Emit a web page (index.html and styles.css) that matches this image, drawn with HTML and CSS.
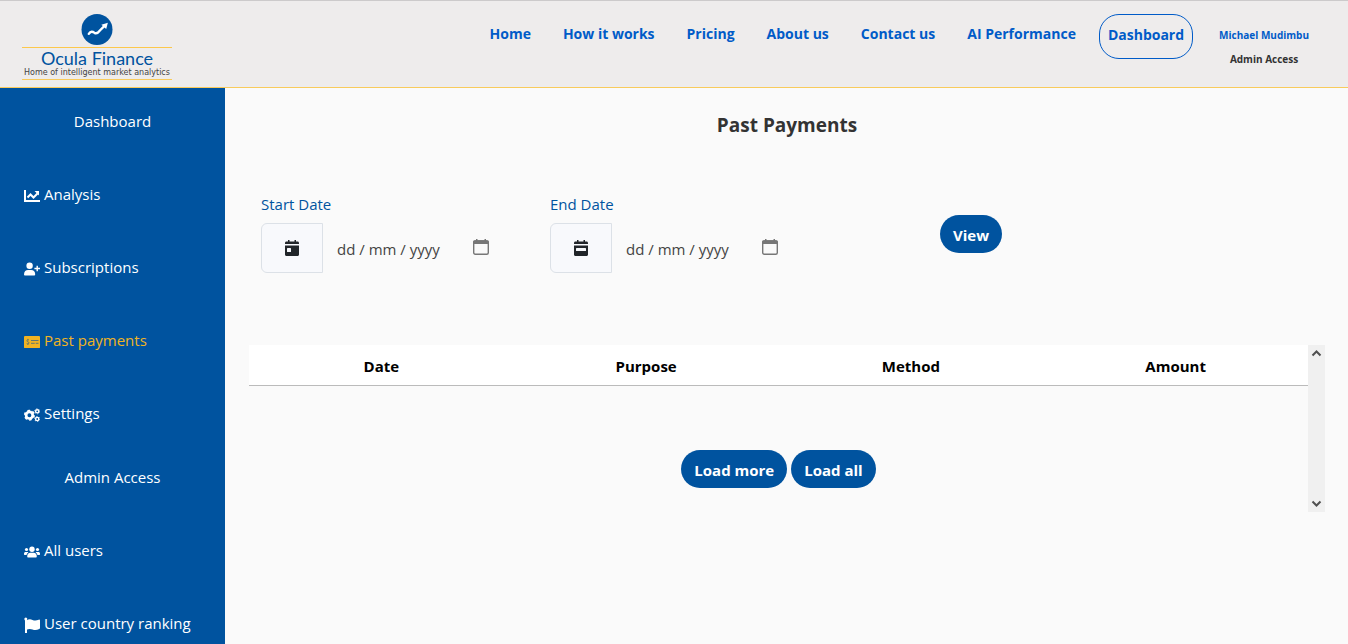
FILE: index.html
```html
<!DOCTYPE html>
<html lang="en">
<head>
<meta charset="utf-8">
<title>Ocula Finance - Past Payments</title>
<link rel="stylesheet" href="styles.css">
</head>
<body>
<header class="topbar">
  <a class="brand" href="#">
    <svg class="brand-mark" viewBox="0 0 32 32" aria-hidden="true">
      <circle cx="16" cy="16" r="16" fill="#00539f"/>
      <path d="M7.500 20.500c2-3 4-2.500 6-1 2.500 1.500 4-.5 5.500-2.500l5-5" fill="none" stroke="#fff" stroke-width="2.400" stroke-linecap="round"/>
      <path d="M20.500 11l6.700-2-1.700 6.500z" fill="#fff"/>
    </svg>
    <span class="brand-name">Ocula Finance</span>
    <span class="brand-tag">Home of intelligent market analytics</span>
  </a>
  <nav class="nav" aria-label="Main">
    <a href="#">Home</a>
    <a href="#">How it works</a>
    <a href="#">Pricing</a>
    <a href="#">About us</a>
    <a href="#">Contact us</a>
    <a href="#">AI Performance</a>
  </nav>
  <a class="nav-button" href="#">Dashboard</a>
  <div class="account">
    <a href="#">Michael Mudimbu</a>
    <span>Admin Access</span>
  </div>
</header>
<div class="layout">
  <nav class="sidebar" aria-label="Dashboard">
    <a class="side-title" href="#">Dashboard</a>
    <a class="side-link" href="#">
      <svg class="icon" viewBox="0 0 16 16" fill="none" stroke="currentColor" aria-hidden="true"><path d="M1 2v11h15" stroke-width="2"/><path d="M3.500 9.500l3-3 3 3 4-4" stroke-width="2"/><path d="M10.500 3H15v4.500z" fill="currentColor" stroke="none"/></svg>
      Analysis</a>
    <a class="side-link" href="#">
      <svg class="icon" viewBox="0 0 16 16" fill="currentColor" aria-hidden="true"><circle cx="5.600" cy="4.800" r="3.200"/><path d="M0 13.200C0 10.500 1.800 9 4 9h3.200c2.200 0 4 1.500 4 4.200 0 .8-.4 1.300-1.200 1.300H1.200C.4 14.500 0 14 0 13.200z"/><path d="M12.500 4.800h1.400v2H16v1.400h-2.100v2.100h-1.400V8.200h-2.100V6.800h2.100z"/></svg>
      Subscriptions</a>
    <a class="side-link active" href="#">
      <svg class="icon" viewBox="0 0 16 16" aria-hidden="true"><path fill="currentColor" d="M.5 2h15l.5.700v11l-.5.300H.5l-.5-.3v-11z"/><path d="M4.900 6.200c-.5-.5-2-.5-2 .6S5 7.700 5 8.900s-1.700 1.200-2.300.6M3.900 4.900v1M3.900 9.700v1.200M7 6.500h7.500M7 9.300h3.700M11.700 9.300h2.800" fill="none" stroke="#4f6e78" stroke-width=".9"/></svg>
      Past payments</a>
    <a class="side-link" href="#">
      <svg class="icon" viewBox="0 0 16 16" fill="none" stroke="currentColor" aria-hidden="true"><circle cx="5.400" cy="8.200" r="3.300" stroke-width="2.700"/><circle cx="5.400" cy="8.200" r="4.700" stroke-width="1.700" stroke-dasharray="2.500 2.422"/><circle cx="13.200" cy="4.300" r="1.600" stroke-width="1.400"/><circle cx="13.200" cy="4.300" r="2.500" stroke-width=".8" stroke-dasharray="1.300 1.318"/><circle cx="13.200" cy="12" r="1.600" stroke-width="1.400"/><circle cx="13.200" cy="12" r="2.500" stroke-width=".8" stroke-dasharray="1.300 1.318"/></svg>
      Settings</a>
    <a class="side-sub" href="#">Admin Access</a>
    <a class="side-link" href="#">
      <svg class="icon" viewBox="0 0 16 16" fill="currentColor" aria-hidden="true"><circle cx="8" cy="5.300" r="2.700"/><circle cx="2.500" cy="5.500" r="1.600"/><circle cx="13.500" cy="5.500" r="1.600"/><path d="M3.200 12.300C3.200 10 4.600 8.800 6.200 8.800h3.600c1.600 0 3 1.200 3 3.500 0 .8-.4 1.200-1.100 1.200H4.300c-.7 0-1.100-.4-1.100-1.200z"/><path d="M0 10.600V9.500C0 8.600.7 8 1.600 8h1.800c.4 0 .8.200 1 .4-1 .6-1.600 1.300-1.800 2.600H.5zM16 10.600V9.500c0-.9-.7-1.500-1.600-1.500h-1.800c-.4 0-.8.200-1 .4 1 .6 1.600 1.300 1.800 2.600h2.100z"/></svg>
      All users</a>
    <a class="side-link" href="#">
      <svg class="icon" viewBox="0 0 16 16" fill="currentColor" aria-hidden="true"><circle cx="1.800" cy="1.900" r="1.500"/><path d="M1 2h2v14H1z"/><path d="M2.500 3.500C4.500 2 6.500 2 8.500 2.900s4 .8 6.200-.2c.8-.3 1.300 0 1.300.7v7.700c0 .5-.2.800-.7 1-2.500 1.200-4.800 1.200-6.800.4s-4-.8-6 .2z"/></svg>
      User country ranking</a>
  </nav>
  <main class="main">
    <h1>Past Payments</h1>
    <form class="filters">
      <div class="field">
        <label for="start">Start Date</label>
        <div class="group">
          <span class="addon"><svg class="icon" viewBox="0 0 16 16" aria-hidden="true"><path fill="currentColor" d="M4 0h1.500v1.500h5V0H12v1.500h1.500c.9 0 1.500.6 1.500 1.500v1H1V3c0-.9.600-1.500 1.500-1.500H4zM1 5.500h14v9c0 .9-.6 1.500-1.500 1.500h-11C1.600 16 1 15.400 1 14.500z"/><rect x="3" y="8" width="4" height="4" rx=".5" fill="#f8f9fc"/></svg></span>
          <input id="start" type="text" placeholder="dd / mm / yyyy">
          <button class="picker" type="button" aria-label="Pick start date"><svg class="icon" viewBox="0 0 16 16" aria-hidden="true"><path fill="currentColor" d="M3 0h1.500v1.300h7V0H13v1.300h1c1.200 0 2 .8 2 2V5H0V3.300c0-1.200.8-2 2-2h1z"/><rect x=".7" y="2" width="14.600" height="13.300" rx="1.500" fill="none" stroke="currentColor" stroke-width="1.400"/></svg></button>
        </div>
      </div>
      <div class="field">
        <label for="end">End Date</label>
        <div class="group">
          <span class="addon"><svg class="icon" viewBox="0 0 16 16" aria-hidden="true"><path fill="currentColor" d="M4 0h1.500v1.500h5V0H12v1.500h1.500c.9 0 1.500.6 1.500 1.500v1H1V3c0-.9.600-1.500 1.500-1.500H4zM1 5.500h14v9c0 .9-.6 1.500-1.500 1.500h-11C1.600 16 1 15.400 1 14.500z"/><rect x="3" y="8" width="10" height="3" rx=".5" fill="#f8f9fc"/></svg></span>
          <input id="end" type="text" placeholder="dd / mm / yyyy">
          <button class="picker" type="button" aria-label="Pick end date"><svg class="icon" viewBox="0 0 16 16" aria-hidden="true"><path fill="currentColor" d="M3 0h1.500v1.300h7V0H13v1.300h1c1.200 0 2 .8 2 2V5H0V3.300c0-1.200.8-2 2-2h1z"/><rect x=".7" y="2" width="14.600" height="13.300" rx="1.500" fill="none" stroke="currentColor" stroke-width="1.400"/></svg></button>
        </div>
      </div>
      <button class="pill view" type="button">View</button>
    </form>
    <section class="payments" aria-label="Payments">
      <div class="payments-body">
        <table>
          <thead><tr><th scope="col">Date</th><th scope="col">Purpose</th><th scope="col">Method</th><th scope="col">Amount</th></tr></thead>
        </table>
        <div class="actions">
          <button class="pill" type="button">Load more</button>
          <button class="pill" type="button">Load all</button>
        </div>
      </div>
      <div class="scrollbar">
        <button type="button" aria-label="Scroll up"><svg viewBox="0 0 17 17" aria-hidden="true"><path d="M4.500 10.500l4-4 4 4" fill="none" stroke="#505050" stroke-width="2"/></svg></button>
        <button type="button" aria-label="Scroll down"><svg viewBox="0 0 17 17" aria-hidden="true"><path d="M4.500 6.500l4 4 4-4" fill="none" stroke="#505050" stroke-width="2"/></svg></button>
      </div>
    </section>
  </main>
</div>
</body>
</html>
```
FILE: styles.css
```css
* { box-sizing: border-box; }

body {
  margin: 0;
  min-height: 100vh;
  display: flex;
  flex-direction: column;
  background: #fafafa;
  color: #333;
  font: 15px/24px "Segoe UI", "Open Sans", "Noto Sans", sans-serif;
}

a { color: inherit; text-decoration: none; }
button { margin: 0; padding: 0; border: 0; font: inherit; cursor: pointer; }
svg { display: block; }
.icon { width: 16px; height: 16px; flex: none; }

.topbar {
  display: flex;
  align-items: flex-start;
  padding: 13px 39px 7px 22px;
  background: #eeecec;
  border-top: 1px solid #cccacb;
  border-bottom: 1px solid #f8cb5c;
}

.brand {
  display: flex;
  flex-direction: column;
  align-items: center;
  width: 150px;
  border-bottom: 1px solid #f8cb5c;
}
.brand-mark { width: 32px; height: 31px; }
.brand-name {
  width: 100%;
  margin-top: 2px;
  border-top: 1px solid #fcc84c;
  color: #00539f;
  font: 18px/20px Lato, sans-serif;
  text-align: center;
}
.brand-tag {
  padding-bottom: 1px;
  color: #444;
  font: 8px/10px "DejaVu Sans", sans-serif;
  white-space: nowrap;
}

.nav {
  display: flex;
  gap: 32px;
  margin: 8px 23px 0 auto;
  color: #005bc8;
  font-size: 14px;
  font-weight: 700;
  white-space: nowrap;
}
.nav-button {
  padding: 8px 8px 11px;
  border: 1px solid #005bc8;
  border-radius: 20px;
  color: #005bc8;
  font-size: 14px;
  font-weight: 700;
}
.account {
  display: flex;
  flex-direction: column;
  align-items: center;
  margin: 9px 0 0 26px;
  font-size: 10px;
  font-weight: 700;
}
.account a { color: #005bc8; }

.layout { display: flex; flex: 1; }

.sidebar {
  display: flex;
  flex-direction: column;
  gap: 49px;
  width: 225px;
  flex: none;
  padding: 21px 24px 9px;
  background: #00539f;
  color: #fff;
}
.side-title, .side-sub { text-align: center; }
.side-sub { margin-top: -9px; }
.side-link { display: flex; align-items: center; gap: 4px; white-space: nowrap; }
.side-link .icon { margin-top: 3px; }
.active { color: #f0b323; }

.main { flex: 1; min-width: 0; padding: 22px 23px 24px 24px; }
h1 { margin: 0; font-size: 19px; font-weight: 700; line-height: 30px; text-align: center; }

.filters {
  display: flex;
  align-items: flex-start;
  padding: 52px 12px 72px;
}
.field { width: 289px; }
.field label { display: block; margin-bottom: 7px; color: #00539f; }
.group { display: flex; height: 50px; }
.addon {
  display: grid;
  place-items: center;
  width: 62px;
  border: 1px solid #dce1e7;
  border-radius: 6px 0 0 6px;
  background: #f8f9fc;
  color: #212529;
}
.group input {
  width: 150px;
  padding: 2px 0 0 14px;
  border: 0;
  background: none;
  color: #333;
  font: inherit;
}
.group input::placeholder { color: #444; opacity: 1; }
.picker { padding-bottom: 2px; background: none; color: #777; }

.pill {
  padding: 8px 13px 6px;
  border-radius: 19px;
  background: #00539f;
  color: #fff;
  font-weight: 700;
}
.view { margin: 23px 0 0 101px; }

.payments { display: flex; }
.payments-body { flex: 1; padding-bottom: 24px; }
table { width: 100%; table-layout: fixed; border-collapse: collapse; background: #fff; color: #000; }
th { height: 40px; padding: 3px 0 0; border-bottom: 1px solid #bbb; }
.actions { display: flex; justify-content: center; gap: 4px; margin-top: 64px; }

.scrollbar {
  display: flex;
  flex-direction: column;
  justify-content: space-between;
  width: 17px;
  background: #f0f0f0;
}
.scrollbar button { width: 17px; height: 17px; background: none; }
```
